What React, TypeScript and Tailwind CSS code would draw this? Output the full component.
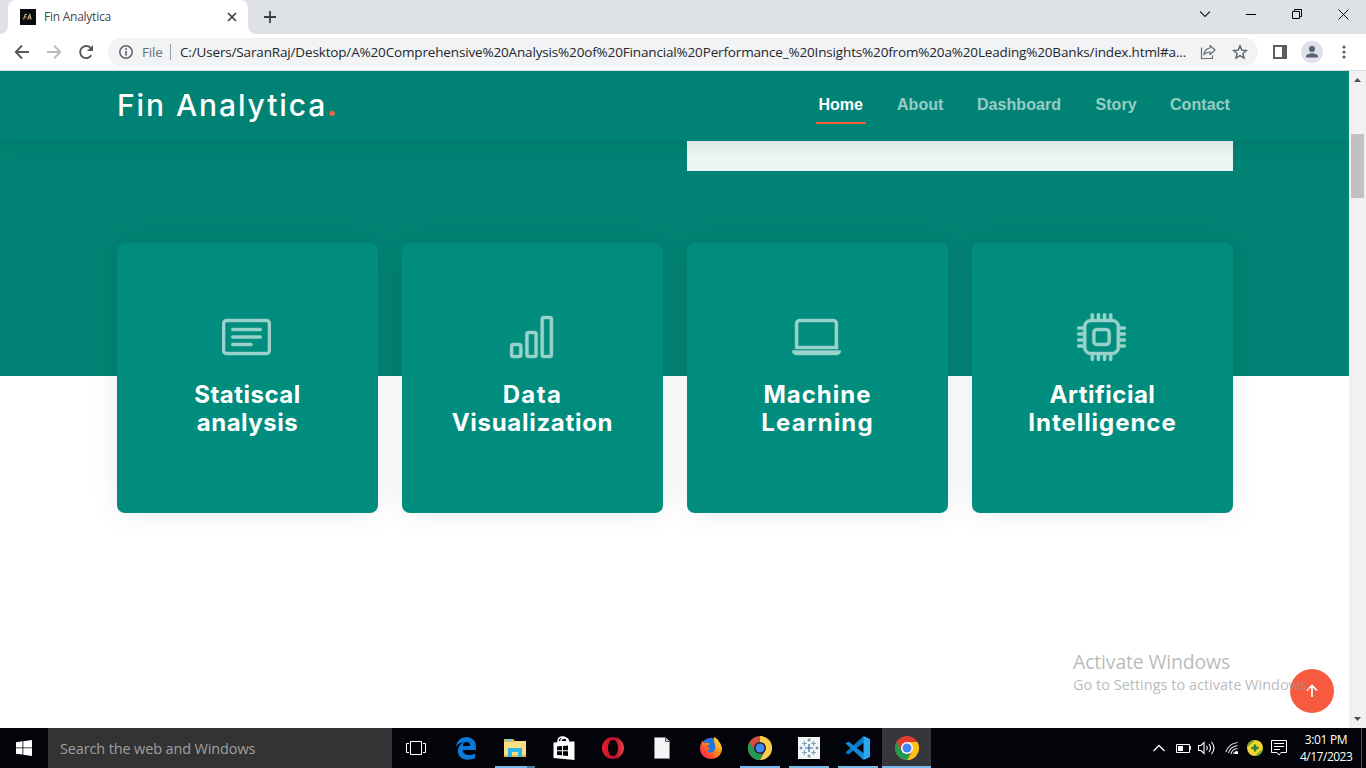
import type { ComponentType, ReactNode } from "react";
import { BsBarChart, BsCardText, BsCpu, BsLaptop } from "react-icons/bs";

const UI = "font-['Open_Sans','Noto_Sans',sans-serif]";
const DISPLAY = "font-['Inter',sans-serif]";

function FinFavicon() {
  return (
    <svg width="16" height="16" viewBox="0 0 16 16">
      <rect width="16" height="16" fill="#0b0b0d" />
      <path d="M3.5 10.5 5.2 5.5H7M4.5 8h2M7.5 10.5l2.3-5 1.2 5M8.5 9h2" stroke="#c9b27a" strokeWidth="1.1" fill="none" />
    </svg>
  );
}

function TabStrip() {
  return (
    <div className="flex h-[34px] bg-[#dee1e6]">
      <div className="flex w-2 items-end bg-white">
        <div className="h-full w-2 rounded-br-lg bg-[#dee1e6]" />
      </div>
      <div className="flex w-60 items-center bg-[#dee1e6]">
        <div className="flex h-[34px] w-60 items-center rounded-t-lg bg-white pr-[10px] pl-3">
          <FinFavicon />
          <span className="ml-2 flex-1 text-[12px] tracking-[-0.25px] text-[#45494d]">Fin Analytica</span>
          <svg width="12" height="12" viewBox="0 0 12 12">
            <path d="m2 2 8 8M10 2l-8 8" stroke="#3c4043" strokeWidth="1.7" />
          </svg>
        </div>
      </div>
      <div className="w-2 bg-white">
        <div className="h-full rounded-bl-lg bg-[#dee1e6]" />
      </div>
      <svg className="mt-[11px] ml-2" width="12" height="12" viewBox="0 0 12 12">
        <path d="M6 0v12M0 6h12" stroke="#3c4043" strokeWidth="1.8" />
      </svg>
      <div className="ml-auto flex h-7 items-center">
        <svg className="mr-[35px]" width="12" height="12" viewBox="0 0 12 12">
          <path d="m1 3.500 5 5 5-5" stroke="#222" strokeWidth="1.100" fill="none" />
        </svg>
        <svg className="mr-9" width="10" height="10" viewBox="0 0 10 10">
          <path d="M0 5.500h10" stroke="#000" />
        </svg>
        <svg className="mr-9" width="10" height="10" viewBox="0 0 10 10">
          <path d="M.5 2.500h7v7h-7zM2.500 2V.5h7v7H8" stroke="#000" fill="none" />
        </svg>
        <svg className="mr-[17px]" width="11" height="11" viewBox="0 0 11 11">
          <path d="m.5.5 10 10M10.500.5l-10 10" stroke="#111" />
        </svg>
      </div>
    </div>
  );
}

function AddressBar() {
  return (
    <div className="flex h-[37px] items-center border-b border-[#d5dade] bg-white pl-[14px]">
      <svg width="16" height="16" viewBox="0 0 16 16">
        <path d="M15 8H2M8 1.500 1.800 8 8 14.500" stroke="#55595e" strokeWidth="1.900" fill="none" />
      </svg>
      <svg className="ml-4" width="16" height="16" viewBox="0 0 16 16">
        <path d="M1 8h13M8 1.500 14.200 8 8 14.500" stroke="#babcbe" strokeWidth="1.900" fill="none" />
      </svg>
      <svg className="ml-4" width="16" height="16" viewBox="0 0 16 16">
        <path d="M13.300 11.200A6 6 0 1 1 12.400 3.800" stroke="#55595e" strokeWidth="1.900" fill="none" />
        <path d="M15 1v6H9z" fill="#55595e" />
      </svg>
      <div className="ml-[14px] flex h-7 w-[1150px] items-center rounded-full bg-[#f1f3f4] pl-[11px]">
        <svg width="14" height="14" viewBox="0 0 14 14">
          <circle cx="7" cy="7" r="6.200" stroke="#5f6368" strokeWidth="1.500" fill="none" />
          <path d="M7 6v4.500M7 3.300v1.600" stroke="#5f6368" strokeWidth="1.600" />
        </svg>
        <span className="ml-[9px] w-[28px] text-[13.5px] tracking-[-0.2px] text-[#6b6f74]">File</span>
        <div className="h-4 w-px bg-[#9aa0a6]" />
        <span className="ml-[9px] w-[1020px] whitespace-nowrap text-[13.5px] tracking-[-0.155px] text-[#24272b]">
          C:/Users/SaranRaj/Desktop/A%20Comprehensive%20Analysis%20of%20Financial%20Performance_%20Insights%20from%20a%20Leading%20Banks/index.html#a...
        </span>
        <svg width="16" height="16" viewBox="0 0 16 16">
          <path d="M1.500 3.500v11h11v-3" stroke="#6a6d71" strokeWidth="1.200" fill="none" />
          <path d="M10 1.500 15 6l-5 4.500V8C7 8 5 9 4 11c.2-4 2.500-6.500 6-7z" stroke="#6a6d71" strokeWidth="1.200" fill="none" strokeLinejoin="round" />
        </svg>
        <svg className="ml-4" width="16" height="16" viewBox="0 0 16 16">
          <path d="m8 1.900 1.800 4.200 4.600.4-3.500 3 1.100 4.500L8 11.600 4 14l1.100-4.500-3.500-3 4.600-.4z" stroke="#5f6368" strokeWidth="1.400" fill="none" />
        </svg>
      </div>
      <svg className="ml-[15px]" width="14" height="14" viewBox="0 0 14 14">
        <path d="M1 1h12v12H1z" stroke="#5a5e63" strokeWidth="2" fill="none" />
        <path d="M9 1h4v12H9z" fill="#5a5e63" />
      </svg>
      <svg className="ml-[14px]" width="22" height="22" viewBox="0 0 22 22">
        <circle cx="11" cy="11" r="11" fill="#dee1e6" />
        <circle cx="11" cy="8" r="3.100" fill="#566378" />
        <path d="M5 16.500v-1.300c0-2 4-3 6-3s6 1 6 3v1.300z" fill="#566378" />
      </svg>
      <svg className="ml-[19px]" width="4" height="14" viewBox="0 0 4 14">
        <circle cx="2" cy="2" r="1.600" fill="#5f6368" />
        <circle cx="2" cy="7" r="1.600" fill="#5f6368" />
        <circle cx="2" cy="12" r="1.600" fill="#5f6368" />
      </svg>
    </div>
  );
}

function SiteHeader() {
  const link = "mt-[5px] text-white/60";
  return (
    <header className="relative z-10 flex h-[70px] shrink-0 items-center bg-[#008374] pl-[117px] shadow-[3px_3px_18px_rgba(0,0,0,0.1)]">
      <div className={`mb-[2px] w-[699px] whitespace-nowrap text-[30px] leading-none font-medium tracking-[1.9px] text-white ${DISPLAY}`}>
        Fin Analytica<span className="-ml-px text-[32px] leading-none font-bold text-[#f85a40]">.</span>
      </div>
      <nav className="flex font-['Liberation_Sans',Arial,sans-serif] text-[16px] leading-6 font-bold tracking-[0.06px]">
        <div className="flex w-[81px]">
          <div className="mt-[5px] h-[31px] w-[50px] border-b-2 border-[#f85a40] pl-[2.5px] text-white">
            <span className="tracking-[-0.02px]">Home</span>
          </div>
        </div>
        <div className={`w-20 ${link}`}>About</div>
        <div className={`w-[118.5px] ${link}`}>Dashboard</div>
        <div className={`w-[74.5px] ${link}`}>Story</div>
        <div className={link}>Contact</div>
      </nav>
    </header>
  );
}

type IconType = ComponentType<{ className?: string; preserveAspectRatio?: string }>;

const services: { icon: IconType; lines: [string, string]; spacing: [string, string] }[] = [
  { icon: BsCardText, lines: ["Statiscal", "analysis"], spacing: ["tracking-[0.5px]", "tracking-[0.5px]"] },
  { icon: BsBarChart, lines: ["Data", "Visualization"], spacing: ["tracking-[1.4px]", "tracking-[0.7px]"] },
  { icon: BsLaptop, lines: ["Machine", "Learning"], spacing: ["tracking-[1px]", "tracking-[1.1px]"] },
  { icon: BsCpu, lines: ["Artificial", "Intelligence"], spacing: ["tracking-[0.5px]", "tracking-[0.95px]"] },
];

function Services() {
  return (
    <div className="relative -mt-[133px] ml-[117px] grid w-[1116px] grid-cols-4 gap-6">
      {services.map(({ icon: Icon, lines, spacing }) => (
        <div key={lines[0]} className="flex h-[270px] flex-col items-center rounded-lg bg-[#008d7d] pt-[70px] shadow-[0_0_30px_rgba(0,0,0,0.08)]">
          <Icon className="mr-[2px] h-12 w-[49px] stroke-[0.15px] text-white opacity-60" preserveAspectRatio="none" />
          <h4 className={`mt-5 text-center text-[24px] leading-7 font-bold whitespace-nowrap text-white ${DISPLAY}`}>
            <span className={`block ${spacing[0]}`}>{lines[0]}</span>
            <span className={`block ${spacing[1]}`}>{lines[1]}</span>
          </h4>
        </div>
      ))}
    </div>
  );
}

function Scrollbar() {
  return (
    <div className="flex w-[17px] shrink-0 flex-col items-center bg-[#f1f1f1]">
      <svg width="17" height="17" viewBox="0 0 17 17">
        <path d="M5 11h7L8.500 7z" fill="#505050" />
      </svg>
      <div className="mt-[46px] h-16 w-[13px] bg-[#c1c1c1]" />
      <svg className="mt-auto" width="17" height="17" viewBox="0 0 17 17">
        <path d="M5 6h7l-3.500 4z" fill="#505050" />
      </svg>
    </div>
  );
}

function Page() {
  return (
    <div className="flex h-[657px]">
      <main className="relative flex flex-1 flex-col overflow-hidden bg-white">
        <SiteHeader />
        <div className="h-[235px] shrink-0 bg-[#008374] pl-[687px]">
          <div className="h-[30px] w-[546px] bg-[#eef6f4]" />
        </div>
        <Services />
        <div className="absolute top-[598px] left-[1290px] flex h-11 w-11 items-center justify-center rounded-full bg-[#f85a40]">
          <svg width="12" height="14" viewBox="0 0 12 14">
            <path d="M6 13V2M1 6.500l5-5 5 5" stroke="#fff" strokeWidth="1.700" fill="none" />
          </svg>
        </div>
        <div className={`absolute top-[577px] left-[1073px] whitespace-nowrap text-[#9b9b9b]/70 ${UI}`}>
          <div className="text-[19.5px] leading-[27px] tracking-[-0.18px]">Activate Windows</div>
          <div className="mt-px text-[14.5px] leading-[18px] tracking-[0px]">Go to Settings to activate Windows.</div>
        </div>
      </main>
      <Scrollbar />
    </div>
  );
}

function Slot({ children, state = "" }: { children: ReactNode; state?: "open" | "active" | "stacked" | "" }) {
  return (
    <div className={`flex h-10 w-[49px] shrink-0 flex-col items-center ${state === "active" ? "bg-[#35373b]" : ""}`}>
      <div className="flex h-[38px] items-center pt-[2px]">{children}</div>
      {state === "stacked" && (
        <div className="flex h-[2px] w-10">
          <div className="w-8 bg-[#76b9ed]" />
          <div className="w-2 bg-[#4c7ba4]" />
        </div>
      )}
      {state === "open" && <div className="h-[2px] w-10 bg-[#76b9ed]" />}
      {state === "active" && <div className="h-[2px] w-full bg-[#76b9ed]" />}
    </div>
  );
}

function EdgeIcon() {
  return (
    <svg width="22" height="24" viewBox="0 0 22 24">
      <path d="M1 10.500C2 4.500 6 1 11.200 1 17.500 1 21 5.300 21 11v3H7.600c.3 3.500 3.200 5 6.500 5 2.500 0 4.400-.6 6-1.500v4.600c-2 1.100-4.500 1.600-7.300 1.600C6.500 23.700 2.800 20 2.800 15c0-4 2.200-7 5.700-8.700C4.800 6.600 2.500 8.300 1 10.500ZM7.700 10h7.500c0-2.500-1.300-4-3.600-4-2.200 0-3.600 1.600-3.900 4Z" fill="#0a78d6" />
    </svg>
  );
}

function FolderIcon() {
  return (
    <svg width="22" height="20" viewBox="0 0 22 20">
      <path d="M0 1h9l2 2h11v16H0z" fill="#e9b94b" />
      <path d="M2 1h6v2H2z" fill="#7ccbe8" />
      <path d="M0 4h10l1-1h11v14H0z" fill="#fbdf86" />
      <path d="M4 10h14v9h-4v-5H8v5H4z" fill="#31b5e8" />
    </svg>
  );
}

function StoreIcon() {
  return (
    <svg width="22" height="25" viewBox="0 0 22 25">
      <path d="M5 7V4.500C6 .3 13-.5 14 4.500V7M8 6V4c1-3 7-2.500 7.500 1" stroke="#fff" strokeWidth="1.400" fill="none" />
      <path d="m.5 6.500 4.500-.3V5h11v.6l5.500-.1V24L.5 22z" fill="#fff" />
      <path d="m4 10.500 5-.4v4.100H4zM10 10l5-.5v4.700h-5zM4 15.200h5v4.100l-5-.4zM10 15.200h5v4.800l-5-.6z" fill="#020409" />
    </svg>
  );
}

function OperaIcon() {
  return (
    <svg width="24" height="24" viewBox="0 0 24 24">
      <defs>
        <linearGradient id="opera" x1="0" y1="0" x2="1" y2="0">
          <stop offset="0" stopColor="#f01c33" />
          <stop offset=".55" stopColor="#b80f20" />
          <stop offset="1" stopColor="#e8404c" />
        </linearGradient>
      </defs>
      <path d="M12 1a11 11 0 1 0 0 22 11 11 0 0 0 0-22Zm0 3c3 0 4.900 3.500 4.900 8s-1.900 8-4.900 8-4.900-3.500-4.900-8S9 4 12 4Z" fill="url(#opera)" fillRule="evenodd" />
    </svg>
  );
}

function FirefoxIcon() {
  return (
    <svg width="24" height="24" viewBox="0 0 24 24">
      <defs>
        <linearGradient id="fox" x1="1" y1="0" x2="0" y2="1">
          <stop offset="0" stopColor="#fff04a" />
          <stop offset=".4" stopColor="#ff9a1f" />
          <stop offset=".7" stopColor="#ff4b2e" />
          <stop offset="1" stopColor="#e3157f" />
        </linearGradient>
      </defs>
      <circle cx="12" cy="11.500" r="9.800" fill="#2374e0" />
      <path d="M15 1c4 2 4.500 3.500 5 5 2 2 3 4.500 3 7-.5 6-5 10-11 10S1 18.500 1 12.500c0-3.500 1.400-6 3-8 0 1.500.5 2 1.500 2.500 2-.5 3.500 0 5 .5 0 1.500-2.500 2-2.500 3.500l3 1c-1 2-2.500 1.500-2.500 3 1 2 4.500 2 6.500 0C18.500 11 14 7 15 1Z" fill="url(#fox)" />
    </svg>
  );
}

function ChromeIcon({ ring, beta }: { ring: string; beta?: boolean }) {
  return (
    <svg width="24" height="24" viewBox="0 0 24 24">
      <circle cx="12" cy="12" r="12" fill={beta ? "#d84b40" : "#e53b2f"} />
      <path d={beta ? "M12 0a12 12 0 0 1 0 24l5.200-9L12 6z" : "M22.400 6A12 12 0 0 1 12 24l5.200-9L12 6z"} fill={beta ? "#fbce4b" : "#fbc116"} />
      <path d="M12 24A12 12 0 0 1 1.600 6l5.200 9 5.200 3 3.500-.3z" fill="#219a52" />
      <circle cx="12" cy="12" r="6" fill={ring} />
      <circle cx="12" cy="12" r="4.500" fill="#4285f4" />
    </svg>
  );
}

function TableauIcon() {
  return (
    <svg width="22" height="22" viewBox="0 0 22 22">
      <rect width="22" height="22" fill="#f5f5f5" />
      <path d="M11 7v8M7 11h8" stroke="#316c99" strokeWidth="1.200" />
      <path d="M6.500 4v5M4 6.500h5M15.500 4v5M13 6.500h5M6.500 13v5M4 15.500h5M15.500 13v5M13 15.500h5" stroke="#7ba9c4" strokeWidth="1.200" />
      <path d="M11 1.500v3M9.500 3h3M11 17.500v3M9.500 19h3M3 9.500v3M1.500 11h3M19 9.500v3M17.500 11h3" stroke="#4e7896" />
    </svg>
  );
}

function CodeIcon() {
  return (
    <svg width="24" height="24" viewBox="0 0 24 24">
      <path d="M18 6.500 2.500 18.500 0 17v-1L17 .5l1 .5z" fill="#0879c3" />
      <path d="M18 17.500 2.500 5.500 0 7v1l17 15.500 1-.5z" fill="#1489d4" />
      <path d="m17.500 0 6.500 3v18l-6.500 3z" fill="#2aa9f2" />
    </svg>
  );
}

function Tray() {
  return (
    <div className="ml-auto flex h-10 items-center">
      <svg className="mr-[10px]" width="14" height="14" viewBox="0 0 14 14">
        <path d="m1.500 10 5.500-5.500L12.500 10" stroke="#fff" strokeWidth="1.300" fill="none" />
      </svg>
      <svg className="mr-[7px]" width="15" height="12" viewBox="0 0 15 12">
        <path d="M.5 2.500h13v8H.5zM14 4.500h.5v3H14" stroke="#fff" fill="none" />
        <path d="M2 4h5v5H2z" fill="#fff" />
      </svg>
      <svg className="mr-[9px]" width="18" height="14" viewBox="0 0 18 14">
        <path d="M.5 4.500H3l3-3v11l-3-3H.5zM8.500 5q1.500 2 0 4M11 3q3 4 0 8M13.500 1q5 6 0 12" stroke="#fff" strokeWidth="1.100" fill="none" />
      </svg>
      <svg className="mr-2" width="14" height="14" viewBox="0 0 14 14">
        <path d="M1 11Q3 3 12.500 1.500M3.500 12Q5 6 12.500 4.500M6 13q1-5 6.500-5.500M8.500 13q.5-2 4-2.500" stroke="#ddd" strokeWidth="1.200" fill="none" />
        <path d="M10 10.500h3V13h-3z" fill="#fff" />
      </svg>
      <svg className="mr-2" width="16" height="16" viewBox="0 0 16 16">
        <circle cx="8" cy="8" r="8" fill="#f3d32d" />
        <path d="M8 0a8 8 0 0 0-8 7c2-1 5-4 8-7ZM8 16a8 8 0 0 0 8-7c-2 1-5 4-8 7Z" fill="#68ad32" />
        <path d="M8 4.500v7M4.500 8h7" stroke="#238538" strokeWidth="2.400" />
      </svg>
      <svg className="mr-[13px]" width="16" height="16" viewBox="0 0 16 16">
        <path d="M.5.5h15v12H10L8 15l-2-2.500H.5zM3 3.500h10M3 6.500h10M3 9.500h6" stroke="#fff" fill="none" />
      </svg>
      <div className="w-[52px] text-center text-[12px] leading-[17px] whitespace-nowrap text-white">
        <div className="-mt-px tracking-[-0.35px]">3:01 PM</div>
        <div className="tracking-[-0.5px]">4/17/2023</div>
      </div>
      <div className="ml-[9px] h-10 w-px bg-[#4b4e52]" />
      <div className="w-1" />
    </div>
  );
}

function Taskbar() {
  return (
    <div className="flex h-10 bg-[#020409]">
      <div className="flex w-12 items-center justify-center">
        <svg width="16" height="16" viewBox="0 0 16 16">
          <path d="M0 2.300 6.500 1.300v6.200H0zM7.300 1.200 16 0v7.500H7.300zM0 8.300h6.500v6.300L0 13.700zM7.300 8.300H16V16l-8.700-1.200z" fill="#fff" />
        </svg>
      </div>
      <div className="flex w-[344px] items-center bg-[#333] pt-px pl-3 text-[14.5px] tracking-[-0.14px] text-[#9f9f9f]">Search the web and Windows</div>
      <div className="flex">
        <Slot>
          <svg className="mr-px" width="20" height="14" viewBox="0 0 20 14">
            <path d="M4.500.5h11v13h-11zM3 2.500H.5v9H3M17 2.500h2.500v9H17" stroke="#fff" fill="none" />
          </svg>
        </Slot>
        <Slot><EdgeIcon /></Slot>
        <Slot state="stacked"><FolderIcon /></Slot>
        <Slot><StoreIcon /></Slot>
        <Slot><OperaIcon /></Slot>
        <Slot>
          <svg width="16" height="22" viewBox="0 0 16 22">
            <path d="M.5.500h11l4 4v17H.5z" fill="#f4f5f6" stroke="#8f9295" strokeWidth=".7" />
            <path d="M11.500.5v4h4" fill="#ccc" stroke="#555" />
          </svg>
        </Slot>
        <Slot><FirefoxIcon /></Slot>
        <Slot state="open"><ChromeIcon ring="#202126" beta /></Slot>
        <Slot state="open"><TableauIcon /></Slot>
        <Slot state="open"><CodeIcon /></Slot>
        <Slot state="active"><ChromeIcon ring="#fff" /></Slot>
      </div>
      <Tray />
    </div>
  );
}

export default function App() {
  return (
    <div className={`h-[768px] w-[1366px] overflow-hidden bg-white ${UI}`}>
      <TabStrip />
      <AddressBar />
      <Page />
      <Taskbar />
    </div>
  );
}
